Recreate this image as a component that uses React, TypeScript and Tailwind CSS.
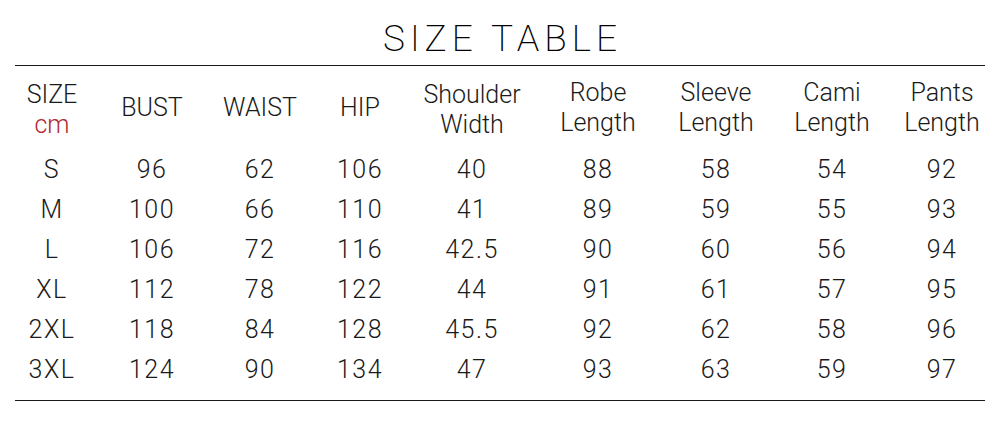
const headers: string[][] = [
  ["SIZE", "cm"],
  ["BUST"],
  ["WAIST"],
  ["HIP"],
  ["Shoulder", "Width"],
  ["Robe", "Length"],
  ["Sleeve", "Length"],
  ["Cami", "Length"],
  ["Pants", "Length"],
];

const rows: string[][] = [
  ["S", "96", "62", "106", "40", "88", "58", "54", "92"],
  ["M", "100", "66", "110", "41", "89", "59", "55", "93"],
  ["L", "106", "72", "116", "42.5", "90", "60", "56", "94"],
  ["XL", "112", "78", "122", "44", "91", "61", "57", "95"],
  ["2XL", "118", "84", "128", "45.5", "92", "62", "58", "96"],
  ["3XL", "124", "90", "134", "47", "93", "63", "59", "97"],
];

const cols = "grid grid-cols-[104px_96px_120px_80px_144px_108px_128px_104px_116px]";

export default function App() {
  return (
    <div className="w-[1000px] h-[425px] bg-white text-[#1a1a1a] font-['Roboto',sans-serif] overflow-hidden">
      {/* title */}
      <div className="h-[65px] flex items-center justify-center pt-[12px]">
        <h1 className="text-[37px] font-extralight text-black tracking-[5px] leading-none pl-[5px]">SIZE TABLE</h1>
      </div>
      <div className="mx-[15px] h-px bg-[#1a1a1a]" />

      {/* header row */}
      <div className={`${cols} h-[84px] items-center text-[25px] font-light`}>
        {headers.map((h, i) => (
          <div
            key={i}
            className={`flex flex-col items-center leading-[30px] ${i === 0 || i === 4 ? "pt-[4px]" : ""}`}
          >
            {h.map((line, j) => (
              <span key={j} className={i === 0 && j === 1 ? "text-[#b3262e]" : ""}>
                {line}
              </span>
            ))}
          </div>
        ))}
      </div>

      {/* data rows */}
      <div className="text-[25px] font-light tracking-[1.5px]">
        {rows.map((r, i) => (
          <div key={i} className={`${cols} h-[40px] items-center`}>
            {r.map((v, j) => (
              <div key={j} className="text-center">
                {v}
              </div>
            ))}
          </div>
        ))}
      </div>

      <div className="mx-[15px] mt-[10px] h-px bg-[#1a1a1a]" />
    </div>
  );
}
